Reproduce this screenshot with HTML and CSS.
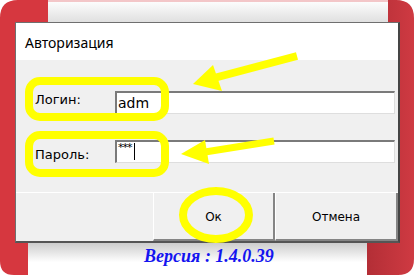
FILE: index.html
```html
<!DOCTYPE html>
<html lang="ru">
<head>
  <meta charset="UTF-8">
  <title>Авторизация</title>
  <link rel="stylesheet" href="styles.css">
</head>
<body>
  <div class="screen">
    <svg class="backdrop" width="414" height="275" viewBox="0 0 414 275">
      <defs>
        <linearGradient id="topFade" x1="0" y1="0" x2="0" y2="1">
          <stop offset="0" stop-color="#ffffff"/>
          <stop offset="1" stop-color="#e0e0e0"/>
        </linearGradient>
        <linearGradient id="bottomFade" x1="0" y1="0" x2="0" y2="1">
          <stop offset="0" stop-color="#cdcdcd"/>
          <stop offset="0.6" stop-color="#ffffff"/>
        </linearGradient>
        <linearGradient id="rightRed" x1="0" y1="0" x2="1" y2="0">
          <stop offset="0" stop-color="#b32e36"/>
          <stop offset="1" stop-color="#cf3a42"/>
        </linearGradient>
      </defs>
      <rect width="414" height="275" fill="#fff"/>
      <rect x="40" y="0" width="360" height="22" fill="url(#topFade)"/>
      <rect x="40" y="0" width="360" height="2" fill="#f3c6c8"/>
      <rect x="20" y="243" width="360" height="32" fill="url(#bottomFade)"/>
      <path d="M0 18 Q0 0 18 0 L48 0 L48 30 L28 30 L28 275 L14 275 Q0 275 0 261 Z" fill="#d6373f"/>
      <path d="M388 0 L396 0 Q414 0 414 18 L414 259 Q414 275 398 275 L367 275 L367 243 L388 243 Z" fill="url(#rightRed)"/>
    </svg>

    <div class="dialog">
      <div class="title">Авторизация</div>
      <div class="form">
        <div class="row">
          <span class="label login-label">Логин:</span>
          <div class="field">adm</div>
        </div>
        <div class="row second">
          <span class="label pass-label">Пароль:</span>
          <div class="field"><span class="stars">***</span><span class="caret"></span></div>
        </div>
      </div>
      <div class="buttons">
        <div class="spacer"></div>
        <div class="btn">Ок</div>
        <div class="btn">Отмена</div>
      </div>
    </div>

    <div class="version">Версия : 1.4.0.39</div>

    <svg class="marks" width="414" height="275" viewBox="0 0 414 275">
      <g fill="none" stroke="#ffff00" stroke-width="8">
        <rect x="29" y="81" width="136" height="36" rx="11"/>
        <rect x="29" y="135" width="136" height="38" rx="11"/>
        <ellipse cx="216" cy="215" rx="33" ry="24"/>
        <line x1="214" y1="78" x2="297" y2="56"/>
        <line x1="205" y1="152" x2="274" y2="141" stroke-width="7"/>
      </g>
      <g fill="#ffff00">
        <polygon points="193,84 213,65 222,91"/>
        <polygon points="181,154 205,140 209,164"/>
      </g>
    </svg>
  </div>
</body>
</html>
```

FILE: styles.css
```css
body, html {
  margin: 0;
  padding: 0;
  background: #fff;
}

.screen {
  position: relative;
  width: 414px;
  height: 275px;
  overflow: hidden;
  font-family: "DejaVu Sans", sans-serif;
  color: #000;
}

.backdrop,
.marks {
  position: absolute;
  left: 0;
  top: 0;
}

.marks {
  z-index: 2;
}

.dialog {
  position: relative;
  z-index: 1;
  box-sizing: border-box;
  width: 385px;
  height: 221px;
  margin: 22px 0 0 15px;
  display: flex;
  flex-direction: column;
  background: #f0f0f0;
  border-left: 1px solid #6f6f6f;
  border-top: 1px solid #6f6f6f;
  border-right: 2px solid #454545;
  border-bottom: 2px solid #555;
}

.title {
  height: 37px;
  line-height: 39px;
  padding-left: 9px;
  background: #fff;
  font-family: "Noto Sans", sans-serif;
  font-size: 14px;
}

.form {
  height: 132px;
  box-sizing: border-box;
  padding: 31px 3px 0 19px;
}

.row {
  display: flex;
  align-items: flex-start;
  height: 23px;
}

.row.second {
  margin-top: 26px;
}

.label {
  width: 80px;
  font-size: 13px;
  line-height: 15px;
}

.login-label {
  margin-top: 1px;
}

.pass-label {
  margin-top: 7px;
}

.field {
  flex: 1;
  box-sizing: border-box;
  height: 23px;
  padding-left: 1px;
  display: flex;
  align-items: flex-start;
  background: #fff;
  border-top: 2px solid #7a7a7a;
  border-left: 2px solid #7a7a7a;
  border-right: 1px solid #dedede;
  border-bottom: 1px solid #dedede;
  font-size: 14px;
  line-height: 20px;
}

.stars {
  color: #000;
  font-size: 11px;
  line-height: 10px;
  letter-spacing: -1px;
  margin-top: 1px;
}

.caret {
  width: 0;
  height: 17px;
  margin: 1px 0 0 2px;
  border-left: 1px solid #000;
}

.buttons {
  display: flex;
  height: 49px;
  box-sizing: border-box;
  border-top: 1px solid #fff;
}

.spacer {
  width: 137px;
}

.btn {
  box-sizing: border-box;
  width: 122px;
  display: flex;
  align-items: center;
  justify-content: center;
  padding-top: 2px;
  background: #f0f0f0;
  border-left: 1px solid #fff;
  border-right: 2px solid #858585;
  border-bottom: 2px solid #858585;
  font-size: 12px;
}

.btn + .btn {
  width: 123px;
}

.version {
  position: relative;
  z-index: 1;
  margin-top: 3px;
  padding-left: 4px;
  text-align: center;
  font-family: "Liberation Serif", serif;
  font-size: 18px;
  line-height: 20px;
  font-weight: bold;
  font-style: italic;
  color: #1414f0;
}
```
